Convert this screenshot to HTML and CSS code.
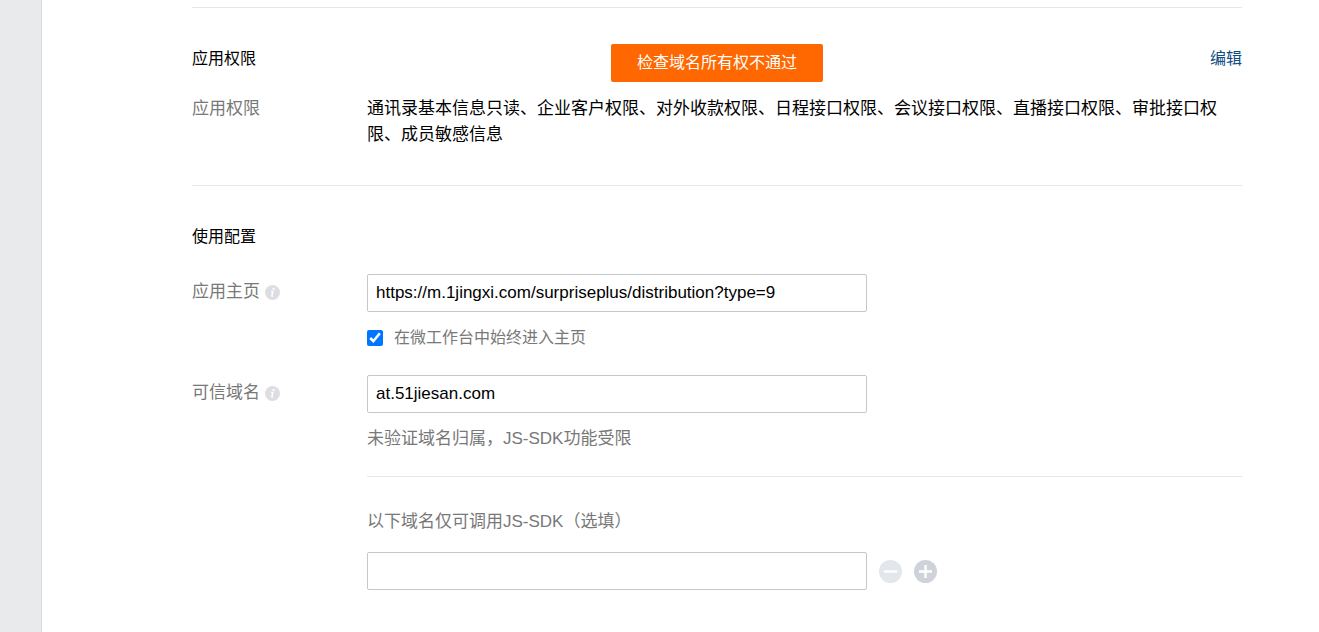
FILE: index.html
```html
<!DOCTYPE html>
<html lang="zh-CN">
<head>
    <meta charset="UTF-8">
    <meta name="viewport" content="width=device-width, initial-scale=1.0">
    <title>应用配置</title>
    <link rel="stylesheet" href="styles.css">
</head>
<body>
    <aside class="side-strip"></aside>

    <main class="content">
        <!-- Permissions -->
        <section class="section">
            <div class="section-head">
                <h2>应用权限</h2>
                <div class="toast" role="alert">检查域名所有权不通过</div>
                <a href="#" class="edit-link">编辑</a>
            </div>
            <div class="row">
                <span class="row-label">应用权限</span>
                <p class="row-body">通讯录基本信息只读、企业客户权限、对外收款权限、日程接口权限、会议接口权限、直播接口权限、审批接口权限、成员敏感信息</p>
            </div>
        </section>

        <!-- Configuration -->
        <section class="section">
            <div class="section-head">
                <h2>使用配置</h2>
            </div>
            <form class="config-form">
                <div class="row">
                    <div class="row-label field-label">
                        <label for="home-url">应用主页</label>
                        <svg class="info-icon" viewBox="0 0 15 15" aria-hidden="true">
                            <circle cx="7.5" cy="7.5" r="7.5" fill="#dcdee2"/>
                            <circle cx="8.6" cy="3.9" r="1.1" fill="#fff"/>
                            <path d="M6.2 6.5h1.6L6.9 10.6q-.1.8 1 .4" fill="none" stroke="#fff" stroke-width="1.5"/>
                        </svg>
                    </div>
                    <div class="row-body">
                        <input type="text" id="home-url" class="text-input" value="https://m.1jingxi.com/surpriseplus/distribution?type=9">
                        <div class="check-line">
                            <input type="checkbox" id="always-home" checked>
                            <label for="always-home">在微工作台中始终进入主页</label>
                        </div>
                    </div>
                </div>

                <div class="row">
                    <div class="row-label field-label">
                        <label for="domain">可信域名</label>
                        <svg class="info-icon" viewBox="0 0 15 15" aria-hidden="true">
                            <circle cx="7.5" cy="7.5" r="7.5" fill="#dcdee2"/>
                            <circle cx="8.6" cy="3.9" r="1.1" fill="#fff"/>
                            <path d="M6.2 6.5h1.6L6.9 10.6q-.1.8 1 .4" fill="none" stroke="#fff" stroke-width="1.5"/>
                        </svg>
                    </div>
                    <div class="row-body">
                        <input type="text" id="domain" class="text-input" value="at.51jiesan.com">
                        <p class="hint">未验证域名归属，JS-SDK功能受限</p>
                        <div class="sdk-domains">
                            <label for="sdk-domain">以下域名仅可调用JS-SDK（选填）</label>
                            <div class="domain-line">
                                <input type="text" id="sdk-domain" class="text-input">
                                <button type="button" class="round-btn remove" aria-label="删除">
                                    <svg viewBox="0 0 23 23"><path d="M5 11.5h13" stroke="#fff" stroke-width="2.4"/></svg>
                                </button>
                                <button type="button" class="round-btn add" aria-label="添加">
                                    <svg viewBox="0 0 23 23"><path d="M5 11.5h13M11.5 5v13" stroke="#fff" stroke-width="2.4"/></svg>
                                </button>
                            </div>
                        </div>
                    </div>
                </div>
            </form>
        </section>
    </main>
</body>
</html>
```
FILE: styles.css
```css
* {
    margin: 0;
    padding: 0;
    box-sizing: border-box;
}

body {
    display: flex;
    min-height: 100vh;
    font-family: "Liberation Sans", "Noto Sans CJK SC", sans-serif;
    font-size: 17px;
    line-height: 26px;
    color: #000;
    background: #fff;
}

.side-strip {
    flex: none;
    width: 42px;
    background: #e8eaeb;
    border-right: 1px solid #d9dcdf;
}

.content {
    flex: 1;
    min-width: 0;
    padding: 7px 77px 0 150px;
}

/* Sections */
.section {
    border-top: 1px solid #e4e6e9;
    padding: 38px 0 37px;
}

.section-head {
    position: relative;
    display: flex;
    justify-content: space-between;
    font-size: 16px;
    margin-bottom: 24px;
}

h2 {
    font-size: 16px;
    font-weight: normal;
}

.edit-link {
    color: #0f4c81;
    text-decoration: none;
}

/* Message shown over the top of the section */
.toast {
    position: absolute;
    top: -2px;
    left: 50%;
    transform: translateX(-50%);
    padding: 6px 26px;
    border-radius: 2px;
    background: #ff6700;
    color: #fff;
    white-space: nowrap;
}

/* Rows */
.row {
    display: flex;
}

.row-label {
    flex: none;
    width: 175px;
    color: #787878;
}

.row-body {
    flex: 1;
    min-width: 0;
}

.config-form {
    display: flex;
    flex-direction: column;
    gap: 24px;
}

.field-label {
    display: flex;
    align-items: center;
    gap: 5px;
    height: 36px;
}

.info-icon {
    width: 15px;
    height: 15px;
}

.text-input {
    display: block;
    width: 500px;
    max-width: 100%;
    height: 38px;
    padding: 0 8px;
    border: 1px solid #c5c7c9;
    border-radius: 2px;
    background: #fff;
    color: #000;
    font-family: inherit;
    font-size: 17px;
}

.check-line {
    display: flex;
    align-items: center;
    gap: 11px;
    margin-top: 13px;
    font-size: 16px;
    color: #787878;
}

.check-line input {
    width: 16px;
    height: 16px;
    accent-color: #0075ff;
}

.hint {
    margin-top: 13px;
    color: #787878;
}

/* Extra domains */
.sdk-domains {
    margin-top: 24px;
    padding-top: 32px;
    border-top: 1px solid #e4e6e9;
    color: #787878;
}

.domain-line {
    display: flex;
    align-items: center;
    gap: 12px;
    margin-top: 17px;
}

.round-btn {
    width: 23px;
    height: 23px;
    border: none;
    border-radius: 50%;
    cursor: pointer;
}

.round-btn svg {
    display: block;
    width: 23px;
    height: 23px;
}

.round-btn.remove {
    background: #e3e6ea;
}

.round-btn.add {
    background: #ced2d9;
}
```
